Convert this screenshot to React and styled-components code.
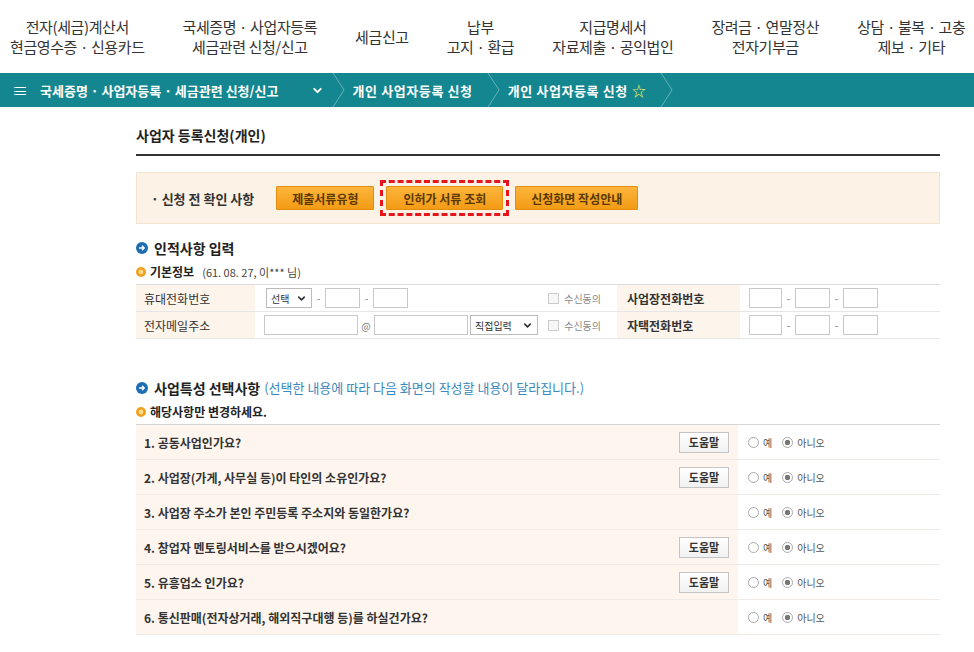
import React from 'react';
import styled, { createGlobalStyle } from 'styled-components';
import { ChevronDown } from 'lucide-react';

const GlobalStyle = createGlobalStyle`
  body {
    margin: 0;
    background: #fff;
    font-family: "Noto Sans CJK KR", "Noto Sans", sans-serif;
    color: #333;
  }
`;

const menus = [
  ['전자(세금)계산서', '현금영수증 · 신용카드'],
  ['국세증명 · 사업자등록', '세금관련 신청/신고'],
  ['세금신고'],
  ['납부', '고지 · 환급'],
  ['지급명세서', '자료제출 · 공익법인'],
  ['장려금 · 연말정산', '전자기부금'],
  ['상담 · 불복 · 고충', '제보 · 기타'],
];

const questions = [
  { text: '1. 공동사업인가요?', help: true },
  { text: '2. 사업장(가게, 사무실 등)이 타인의 소유인가요?', help: true },
  { text: '3. 사업장 주소가 본인 주민등록 주소지와 동일한가요?', help: false },
  { text: '4. 창업자 멘토링서비스를 받으시겠어요?', help: true },
  { text: '5. 유흥업소 인가요?', help: true },
  { text: '6. 통신판매(전자상거래, 해외직구대행 등)를 하실건가요?', help: false },
];

function BlueIcon() {
  return (
    <svg width="12" height="12" viewBox="0 0 12 12">
      <circle cx="6" cy="6" r="6" fill="#1d6db3" />
      <path d="M3 6h5M6 3.8L8.2 6 6 8.2" stroke="#fff" strokeWidth="1.4" fill="none" />
    </svg>
  );
}

function OrangeIcon() {
  return (
    <svg width="10" height="10" viewBox="0 0 10 10">
      <circle cx="5" cy="5" r="5" fill="#f0a01e" />
      <circle cx="5" cy="5" r="2.4" fill="#fbd98a" />
    </svg>
  );
}

function Separator() {
  return (
    <SepSvg width="14" height="34" viewBox="0 0 14 34">
      <path d="M1 0L12 17L1 34" stroke="rgba(255,255,255,0.35)" strokeWidth="1" fill="none" />
    </SepSvg>
  );
}

function Radios() {
  return (
    <RadioGroup>
      <RadioLabel><RadioDot /> 예</RadioLabel>
      <RadioLabel><RadioDot $checked /> 아니오</RadioLabel>
    </RadioGroup>
  );
}

export default function App() {
  return (
    <>
      <GlobalStyle />
      <TopNav>
        {menus.map((m, i) => (
          <NavItem key={i}>
            {m.map((line) => <div key={line}>{line}</div>)}
          </NavItem>
        ))}
      </TopNav>

      <Breadcrumb>
        <Crumb>
          <Burger>≡</Burger>
          국세증명 · 사업자등록 · 세금관련 신청/신고
          <ChevronDown size={13} strokeWidth={3.5} style={{ marginLeft: 32 }} />
        </Crumb>
        <Separator />
        <Crumb $spaced>개인 사업자등록 신청</Crumb>
        <Separator />
        <Crumb $spaced>개인 사업자등록 신청 <Star>☆</Star></Crumb>
        <Separator />
      </Breadcrumb>

      <Content>
        <PageTitle>사업자 등록신청(개인)</PageTitle>

        <CheckBox>
          <CheckLabel>· 신청 전 확인 사항</CheckLabel>
          <OrangeButton>제출서류유형</OrangeButton>
          <Highlight>
            <OrangeButton $wide>인허가 서류 조회</OrangeButton>
          </Highlight>
          <OrangeButton>신청화면 작성안내</OrangeButton>
        </CheckBox>

        <SectionTitle><BlueIcon />인적사항 입력</SectionTitle>
        <SubTitle>
          <OrangeIcon />기본정보 <SubNote>(61. 08. 27, 이*** 님)</SubNote>
        </SubTitle>

        <InfoTable>
          <InfoRow>
            <LabelCell>휴대전화번호</LabelCell>
            <ValueCell>
              <Select $w={46}>선택 <ChevronDown size={11} strokeWidth={3.5} /></Select>
              <Dash>-</Dash>
              <Input $w={35} />
              <Dash>-</Dash>
              <Input $w={35} />
              <Agree><CheckSquare />수신동의</Agree>
            </ValueCell>
            <LabelCell $wide>사업장전화번호</LabelCell>
            <ValueCell>
              <Input $w={33} />
              <Dash>-</Dash>
              <Input $w={35} />
              <Dash>-</Dash>
              <Input $w={35} />
            </ValueCell>
          </InfoRow>
          <InfoRow>
            <LabelCell>전자메일주소</LabelCell>
            <ValueCell>
              <Input $w={94} />
              <At>@</At>
              <Input $w={94} />
              <Select $w={68}>직접입력 <ChevronDown size={11} strokeWidth={3.5} /></Select>
              <Agree><CheckSquare />수신동의</Agree>
            </ValueCell>
            <LabelCell $wide>자택전화번호</LabelCell>
            <ValueCell>
              <Input $w={33} />
              <Dash>-</Dash>
              <Input $w={35} />
              <Dash>-</Dash>
              <Input $w={35} />
            </ValueCell>
          </InfoRow>
        </InfoTable>

        <SectionTitle $top={39}>
          <BlueIcon />사업특성 선택사항
          <SectionNote>(선택한 내용에 따라 다음 화면의 작성할 내용이 달라집니다.)</SectionNote>
        </SectionTitle>
        <SubTitle $top={5}><OrangeIcon />해당사항만 변경하세요.</SubTitle>

        <QuestionTable>
          {questions.map((q) => (
            <QuestionRow key={q.text}>
              <QuestionCell>
                {q.text}
                {q.help && <HelpButton>도움말</HelpButton>}
              </QuestionCell>
              <AnswerCell><Radios /></AnswerCell>
            </QuestionRow>
          ))}
        </QuestionTable>
      </Content>
    </>
  );
}

const TopNav = styled.nav`
  display: flex;
  align-items: center;
  gap: 38px;
  height: 73px;
  padding-left: 10px;
  box-sizing: border-box;
  font-size: 15px;
  color: #333;
`;

const NavItem = styled.div`
  text-align: center;
  line-height: 20px;
  white-space: nowrap;
  letter-spacing: -0.4px;
`;

const Breadcrumb = styled.div`
  display: flex;
  align-items: center;
  height: 34px;
  background: #14868f;
  color: #fff;
  font-size: 13px;
  font-weight: bold;
`;

const Crumb = styled.div`
  display: flex;
  align-items: center;
  padding: ${(p) => (p.$spaced ? '0 14px 0 7px' : '0 8px 0 12px')};
  letter-spacing: ${(p) => (p.$spaced ? '0.6px' : '0')};
  white-space: nowrap;
`;

const Burger = styled.span`
  font-size: 16px;
  font-weight: normal;
  margin-right: 12px;
`;

const Star = styled.span`
  color: #dce85a;
  margin-left: 4px;
  font-size: 14px;
`;

const SepSvg = styled.svg`
  display: block;
  flex-shrink: 0;
`;

const Content = styled.main`
  width: 804px;
  margin-left: 136px;
`;

const PageTitle = styled.h2`
  margin: 0;
  padding: 18px 0 9px;
  line-height: 20px;
  font-size: 14px;
  font-weight: bold;
  color: #222;
  border-bottom: 2px solid #333;
`;

const CheckBox = styled.div`
  display: flex;
  align-items: center;
  gap: 6px;
  margin-top: 16px;
  height: 52px;
  padding-left: 14px;
  background: #fdf2e6;
  border: 1px solid #f3e4d2;
  box-sizing: border-box;
`;

const CheckLabel = styled.span`
  font-size: 13px;
  font-weight: bold;
  color: #333;
  margin-right: 16px;
`;

const OrangeButton = styled.button`
  height: 24px;
  padding: 0 ${(p) => (p.$wide ? 16 : 15)}px;
  border: 1px solid #e38d12;
  background: linear-gradient(#fbb53c, #f39b15);
  color: #5a3800;
  font-family: inherit;
  font-size: 12px;
  font-weight: bold;
  border-radius: 1px;
`;

const Highlight = styled.div`
  display: flex;
  padding: 3px 3px;
  border: 3px dashed #e8141b;
`;

const SectionTitle = styled.h3`
  display: flex;
  align-items: center;
  gap: 6px;
  margin: ${(p) => p.$top || 14}px 0 0;
  line-height: 20px;
  font-size: 14px;
  font-weight: bold;
  color: #222;
`;

const SectionNote = styled.span`
  font-size: 13px;
  font-weight: normal;
  color: #3b88bd;
  margin-left: -2px;
`;

const SubTitle = styled.div`
  display: flex;
  align-items: center;
  gap: 4px;
  margin-top: ${(p) => p.$top || 5}px;
  line-height: 18px;
  font-size: 12px;
  font-weight: bold;
  color: #222;
`;

const SubNote = styled.span`
  font-weight: normal;
  font-size: 11px;
  color: #444;
  margin-left: 4px;
`;

const InfoTable = styled.div`
  margin-top: 3px;
  border-top: 1px solid #ddd;
`;

const InfoRow = styled.div`
  display: grid;
  grid-template-columns: 119px 362px 123px 1fr;
  height: 26px;
  border-bottom: 1px solid #e6e6e6;
`;

const LabelCell = styled.div`
  display: flex;
  align-items: center;
  padding-left: ${(p) => (p.$wide ? 10 : 8)}px;
  background: #fdf4ec;
  font-size: 12px;
  font-weight: ${(p) => (p.$wide ? 'bold' : 'normal')};
  color: #333;
`;

const ValueCell = styled.div`
  display: flex;
  align-items: center;
  padding-left: 9px;
`;

const Input = styled.span`
  display: inline-block;
  width: ${(p) => p.$w}px;
  height: 20px;
  border: 1px solid #c8c8c8;
  box-sizing: border-box;
  background: #fff;
`;

const Select = styled.span`
  display: inline-flex;
  align-items: center;
  justify-content: space-between;
  width: ${(p) => p.$w}px;
  height: 20px;
  padding: 0 4px;
  border: 1px solid #bbb;
  box-sizing: border-box;
  font-size: 10px;
  color: #333;
  margin-left: 2px;
`;

const Dash = styled.span`
  width: 13px;
  text-align: center;
  font-size: 11px;
  color: #888;
`;

const At = styled.span`
  width: 16px;
  text-align: center;
  font-size: 10px;
  color: #777;
`;

const Agree = styled.span`
  display: flex;
  align-items: center;
  gap: 5px;
  margin-left: auto;
  margin-right: 16px;
  font-size: 10px;
  color: #888;
`;

const CheckSquare = styled.span`
  width: 9px;
  height: 9px;
  border: 1px solid #ccc;
  background: #f7f7f7;
`;

const QuestionTable = styled.div`
  margin-top: 3px;
  border-top: 1px solid #d6d6d6;
`;

const QuestionRow = styled.div`
  display: grid;
  grid-template-columns: 602px 1fr;
  height: 34px;
  border-bottom: 1px solid #f0ebe6;
`;

const QuestionCell = styled.div`
  display: flex;
  align-items: center;
  justify-content: space-between;
  padding: 0 9px 0 8px;
  background: #fdf5ee;
  font-size: 12px;
  font-weight: bold;
  color: #333;
`;

const HelpButton = styled.button`
  width: 50px;
  height: 21px;
  padding: 0;
  border: 1px solid #c4c4c4;
  background: linear-gradient(#fff, #f1f1f1);
  font-family: inherit;
  font-size: 11px;
  font-weight: bold;
  color: #333;
`;

const AnswerCell = styled.div`
  display: flex;
  align-items: center;
  padding-left: 10px;
`;

const RadioGroup = styled.div`
  display: flex;
  gap: 10px;
`;

const RadioLabel = styled.span`
  display: flex;
  align-items: center;
  gap: 4px;
  font-size: 10px;
  color: #555;
`;

const RadioDot = styled.span`
  width: 11px;
  height: 11px;
  border-radius: 50%;
  border: 1px solid #aaa;
  box-sizing: border-box;
  background: ${(p) => (p.$checked ? 'radial-gradient(circle, #777 0 2.5px, #fff 3px)' : '#fff')};
`;
